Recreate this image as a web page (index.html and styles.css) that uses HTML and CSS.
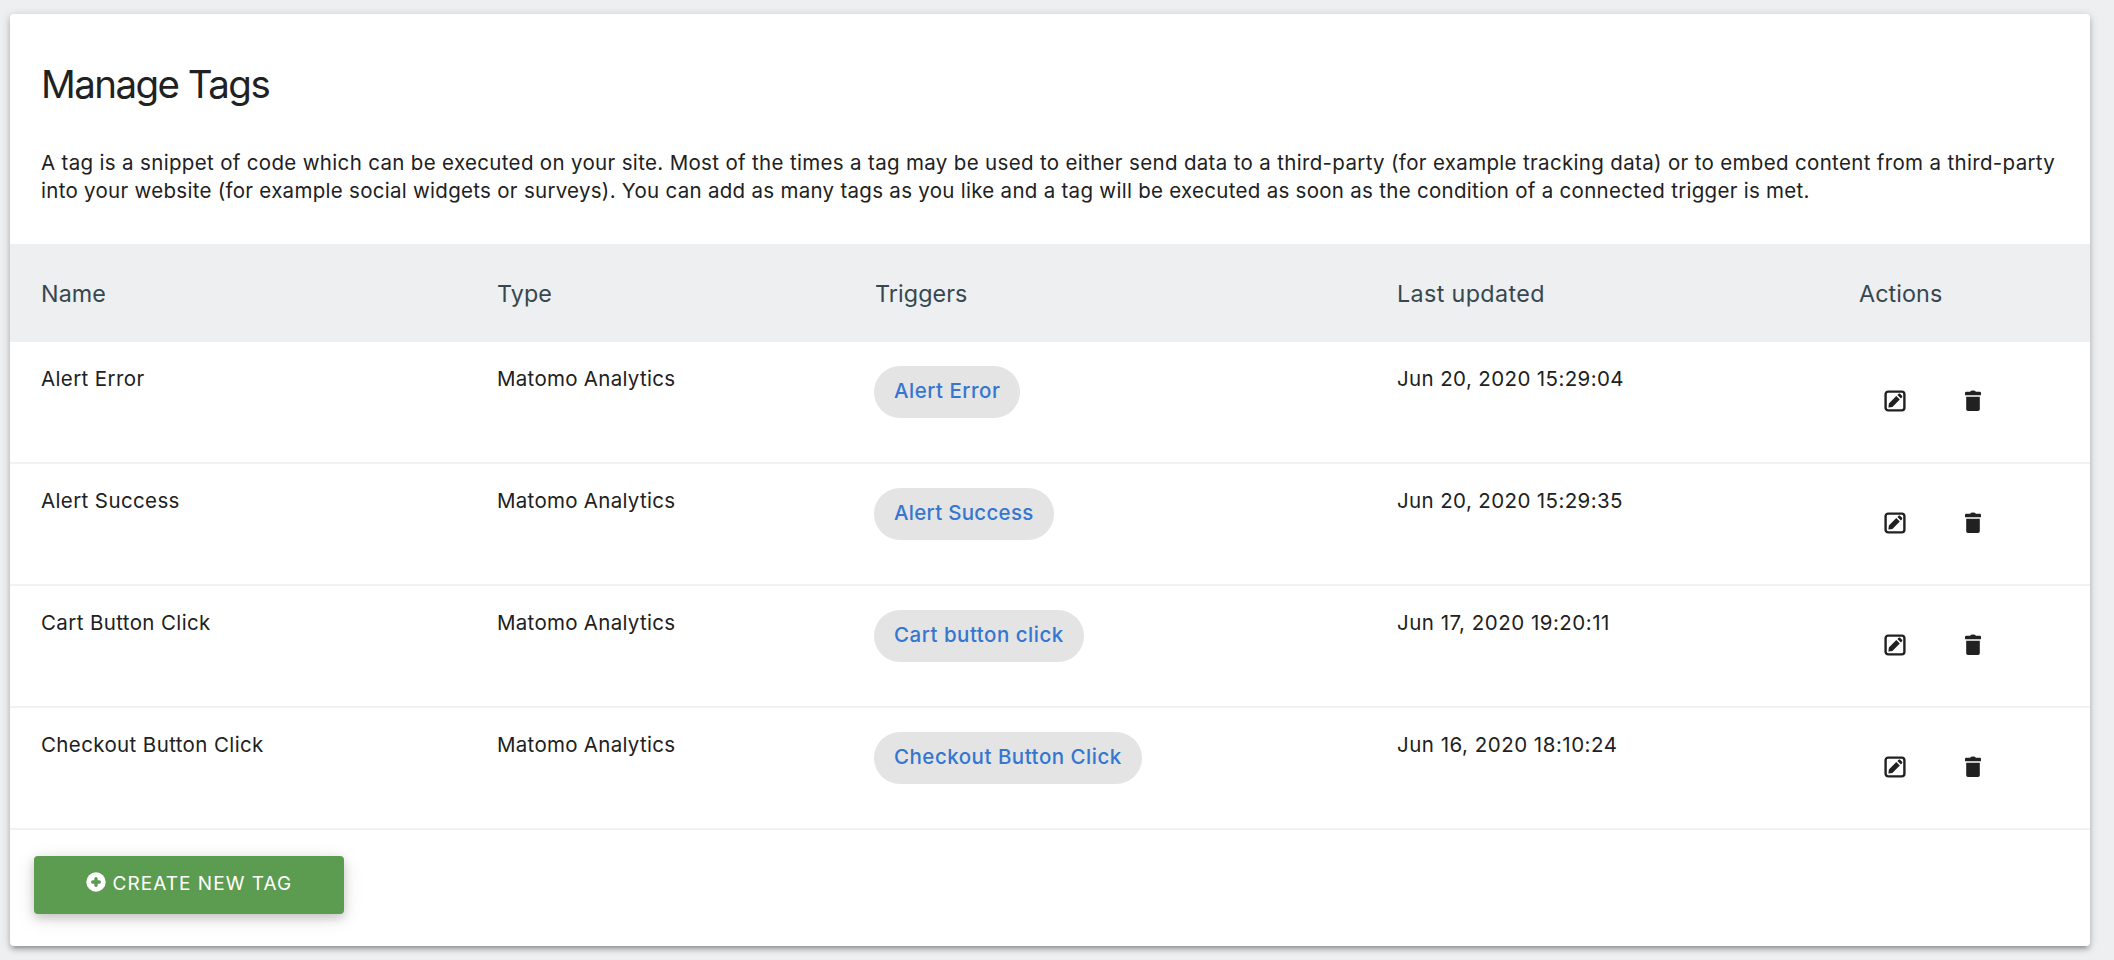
FILE: index.html
```html
<!DOCTYPE html>
<html lang="en">
<head>
<meta charset="utf-8">
<title>Manage Tags</title>
<link rel="stylesheet" href="styles.css">
</head>
<body>
<svg class="sprite" aria-hidden="true">
  <symbol id="edit" viewBox="0 0 22 22">
    <rect x="1.6" y="1.6" width="18.8" height="18.8" rx="2.6" fill="none" stroke="currentColor" stroke-width="2.4"/>
    <path d="M4.400 17.600l.5-4.200 7.400-7.400 3.500 3.500-7.400 7.400zM13.400 5l1.300-1.200c.4-.4 1-.4 1.400 0l2 2c.4.4.4 1 0 1.400L16.900 8.500z" fill="currentColor"/>
  </symbol>
  <symbol id="trash" viewBox="0 0 16 22">
    <path d="M1.200 1.700h4L6 .8Q8 0 10 .8l.8.9h4q1.200 0 1.200 1.200v1.500q0 .9-1 .9H1q-1 0-1-.9V2.900q0-1.200 1.200-1.200zM1.200 6.800h13.600v12.400q0 1.800-1.800 1.800H3q-1.800 0-1.800-1.800z" fill="currentColor"/>
  </symbol>
</svg>
<main class="card">
  <header class="intro">
    <h1 class="title">Manage Tags</h1>
    <p class="description">A tag is a snippet of code which can be executed on your site. Most of the times a tag may be used to either send data to a third-party (for example tracking data) or to embed content from a third-party<br><span class="tight">into your website (for example social widgets or surveys). You can add as many tags as you like and a tag will be executed as soon as the condition of a connected trigger is met.</span></p>
  </header>
  <section class="table">
    <div class="row head"><span>Name</span><span>Type</span><span class="triggers">Triggers</span><span class="updated">Last updated</span><span>Actions</span></div>
    <div class="row"><span>Alert Error</span><span class="tight">Matomo Analytics</span><a class="chip">Alert Error</a><span>Jun 20, 2020 15:29:04</span><div class="actions"><svg class="edit"><use href="#edit"/></svg><svg class="trash"><use href="#trash"/></svg></div></div>
    <div class="row"><span>Alert Success</span><span class="tight">Matomo Analytics</span><a class="chip"><span class="tight">Alert Success</span></a><span>Jun 20, 2020 15:29:35</span><div class="actions"><svg class="edit"><use href="#edit"/></svg><svg class="trash"><use href="#trash"/></svg></div></div>
    <div class="row"><span>Cart Button Click</span><span class="tight">Matomo Analytics</span><a class="chip">Cart button click</a><span class="loose">Jun 17, 2020 19:20:11</span><div class="actions"><svg class="edit"><use href="#edit"/></svg><svg class="trash"><use href="#trash"/></svg></div></div>
    <div class="row"><span>Checkout Button Click</span><span class="tight">Matomo Analytics</span><a class="chip">Checkout Button Click</a><span class="loose">Jun 16, 2020 18:10:24</span><div class="actions"><svg class="edit"><use href="#edit"/></svg><svg class="trash"><use href="#trash"/></svg></div></div>
  </section>
  <button class="create" type="button"><svg class="plus" viewBox="0 0 20 20"><circle cx="10" cy="10" r="9.700" fill="currentColor"/><path d="M10 6.700v6.600M6.700 10h6.600" stroke="#5c9c51" stroke-width="3.400" stroke-linecap="round"/></svg><span>CREATE NEW TAG</span></button>
</main>
</body>
</html>
```
FILE: styles.css
```css
* { box-sizing: border-box; }
body {
  margin: 0;
  padding: 14px 24px 14px 10px;
  background: #edeff1;
  color: #212121;
  font-family: Inter, "Liberation Sans", sans-serif;
  font-size: 20.5px;
  line-height: 28px;
}
.sprite { position: absolute; width: 0; height: 0; }
.card {
  height: 932px;
  background: #fff;
  border-radius: 4px;
  box-shadow: 0 4px 4px rgba(0,0,0,.14), 0 6px 2px -4px rgba(0,0,0,.12), 0 2px 10px rgba(0,0,0,.2);
}
.intro { height: 230px; padding: 46px 0 0 31px; }
.title { margin: 0 0 41px; font-size: 38.5px; line-height: 48px; font-weight: 400; letter-spacing: -1.55px; }
.description { margin: 0; white-space: nowrap; letter-spacing: .333px; }
.row {
  display: grid;
  grid-template-columns: 456px 377px 523px 462px 1fr;
  align-items: start;
  justify-items: start;
  height: 122px;
  padding: 23px 0 0 31px;
  border-bottom: 2px solid #f2f2f2;
  letter-spacing: .38px;
}
.head {
  height: 98px;
  padding-top: 36px;
  border: 0;
  background: #edeff1;
  color: #37474f;
  font-size: 23.3px;
  letter-spacing: .1px;
}
.tight { letter-spacing: .285px; }
.loose { letter-spacing: .5px; }
.updated { letter-spacing: .37px; }
.triggers { padding-left: 1px; }
.chip {
  height: 52px;
  margin-top: 1px;
  padding: 11px 20px 0;
  border-radius: 26px;
  background: #e4e4e4;
  color: #3576d0;
  font-weight: 500;
  letter-spacing: .5px;
}
.actions { display: flex; gap: 59px; padding: 25px 0 0 25px; }
.edit { width: 22px; height: 22px; }
.trash { width: 16px; height: 22px; }
.create {
  display: flex;
  width: 310px;
  height: 58px;
  margin: 26px 0 0 24px;
  padding: 14px 0 0 52px;
  gap: 6.5px;
  border: 0;
  border-radius: 4px;
  background: #5c9c51;
  color: #fff;
  font: 19px/28px Inter, sans-serif;
  letter-spacing: 1.04px;
  box-shadow: 0 4px 10px rgba(0,0,0,.16), 0 4px 20px rgba(0,0,0,.12);
}
.plus { width: 20px; height: 20px; margin-top: 2px; }
```
